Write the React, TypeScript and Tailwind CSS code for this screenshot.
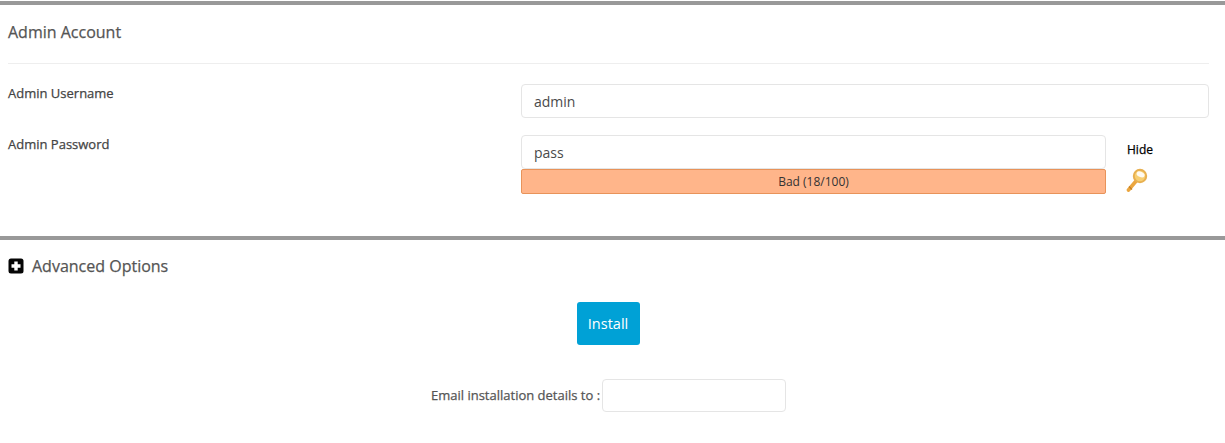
export default function App() {
  return (
    <div className="w-[1225px] h-[443px] overflow-hidden bg-white text-[#555] font-['Open_Sans',sans-serif] text-[13px] pt-px">
      <div className="border-t-4 border-[#999] pl-2 pr-4">
        <div className="h-[59px] border-b border-[#eee] pt-[16px] text-[16px] leading-[22px] text-[#555] [-webkit-text-stroke:0.25px_#555]">Admin Account</div>
        <div className="grid grid-cols-[513px_1fr] mt-5">
          <div className="leading-[19px] text-[#444] [-webkit-text-stroke:0.25px_#444]">Admin Username</div>
          <input readOnly value="admin" className="h-[34px] w-[688px] rounded-[4px] border border-[#e5e5e5] bg-white px-3 text-[14px] text-[#4a4a4a] outline-none" />
        </div>
        <div className="grid grid-cols-[513px_585px_1fr] mt-[17px]">
          <div className="leading-[19px] text-[#444] [-webkit-text-stroke:0.25px_#444]">Admin Password</div>
          <div className="flex flex-col">
            <input readOnly value="pass" className="h-[34px] w-full rounded-[4px] border border-[#e5e5e5] bg-white px-3 text-[14px] text-[#4a4a4a] outline-none" />
            <div className="h-[25px] rounded-[2px] border border-[#e8935a] bg-[#ffb58a] text-center text-[12px] leading-[23px] text-[#333]">Bad (18/100)</div>
          </div>
          <div className="pl-[21px] pt-[6px]">
            <div className="text-[12px] leading-[17px] text-black [-webkit-text-stroke:0.25px_#000]">Hide</div>
            <svg width="22" height="26" viewBox="0 0 22 26" className="mt-[9px] ml-[-1px] block">
              <path d="M2.5 23 L10.5 13.5" stroke="#eba63f" strokeWidth="3.6" strokeLinecap="round" />
              <path d="M3 19.5 L6 22.5" stroke="#c47f22" strokeWidth="1.2" />
              <circle cx="14" cy="9" r="6.2" fill="#f8cf72" stroke="#e8b050" strokeWidth="2" />
              <ellipse cx="14.6" cy="7.4" rx="4.2" ry="2.7" transform="rotate(25 14.6 7.4)" fill="#fffaf0" />
            </svg>
          </div>
        </div>
      </div>
      <div className="mt-[42px] border-t-4 border-[#999] px-2">
        <div className="flex items-center gap-2 mt-[15px] h-[22px]">
          <svg width="16" height="16" viewBox="0 0 16 16" className="block">
            <rect x="0.5" y="0.5" width="15" height="15" rx="2.5" fill="#050505" />
            <path d="M6.3 3.5h3.4v2.8h2.8v3.4H9.7v2.8H6.3V9.7H3.5V6.3h2.8z" fill="#fff" />
          </svg>
          <span className="text-[16px] leading-[22px] text-[#555] [-webkit-text-stroke:0.25px_#555]">Advanced Options</span>
        </div>
        <div className="flex justify-center mt-[25px]">
          <button className="h-[43px] w-[63px] rounded-[3px] bg-[#00a1d6] text-[14.5px] text-white ml-[-9px]">Install</button>
        </div>
        <div className="flex items-center mt-[34px] ml-[423px]">
          <span className="text-[#555] text-[13px] [-webkit-text-stroke:0.25px_#555]">Email installation details to :</span>
          <input readOnly value="" className="ml-[2px] h-[33px] w-[184px] rounded-[4px] border border-[#e5e5e5] bg-white outline-none" />
        </div>
      </div>
    </div>
  );
}
